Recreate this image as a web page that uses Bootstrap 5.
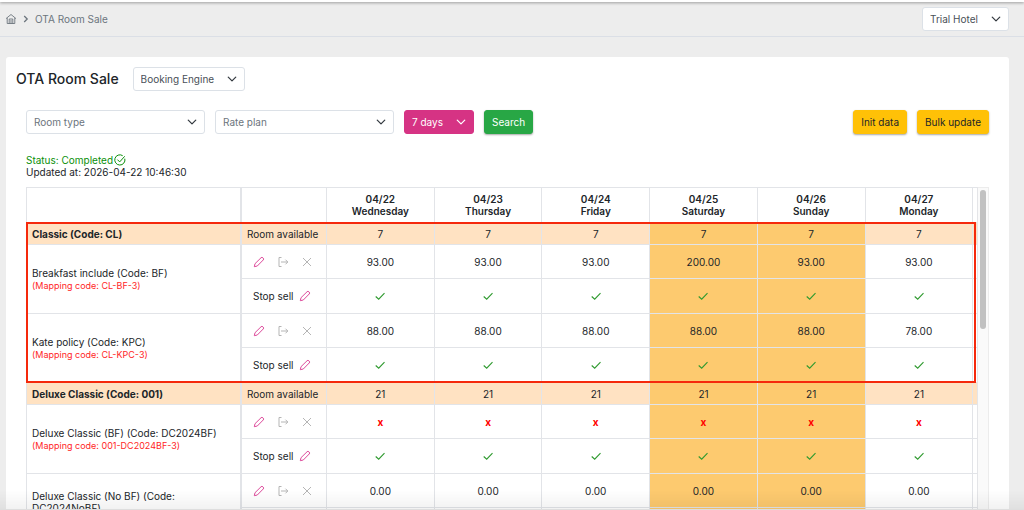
<!DOCTYPE html>
<html lang="en">
<head>
<meta charset="utf-8">
<meta name="viewport" content="width=device-width, initial-scale=1">
<title>OTA Room Sale</title>
<link href="https://cdn.jsdelivr.net/npm/bootstrap@5.3.0/dist/css/bootstrap.min.css" rel="stylesheet">
<style>
  body { font-family: Inter, "Liberation Sans", sans-serif; font-size: 10px; line-height: 12px; color: #212529; background: #ededed; }
  .top-edge { height: 2px; background: #fff; box-shadow: 0 1px 3px rgba(0,0,0,.4); }
  .crumb-bar { height: 35px; padding: 0 15px 0 5px; border-bottom: 1px solid #dbdfe6; }
  .crumb-bar a, .crumb-bar span { color: #6c757d; }
  .panel { margin: 20px 15px 0 6px; border-radius: 3px 3px 0 0; background: #fff; padding: 10px 20px 0; min-height: 0; }
  .panel-head { margin-left: -10px; gap: 14px; }
  .panel-title { font-size: 14px; line-height: 18px; font-weight: 500; margin: 0; }
  .form-select.pick { height: 24px; font-size: 10px; line-height: 14px; padding: 4px 24px 4px 7px; border-color: #dce1e7; border-radius: 3px; color: #495057; background-position: right 7px center; background-size: 10px 10px; }
  .pick.w-hotel { width: 87px; }
  .pick.w-engine { width: 112px; }
  .form-select.pick.w-filter { width: 179px; color: #6c757d; }
  .form-select.pick.w-days { width: 70px; color: #fff; border-color: #d63384; background-color: #d63384; background-image: url("data:image/svg+xml,%3csvg xmlns='http://www.w3.org/2000/svg' viewBox='0 0 16 16'%3e%3cpath fill='none' stroke='%23fff' stroke-linecap='round' stroke-linejoin='round' stroke-width='2' d='m2 5 6 6 6-6'/%3e%3c/svg%3e"); }
  .btn.act { height: 24px; font-size: 10px; line-height: 14px; padding: 4px 7px; border-radius: 3px; box-shadow: 0 1px 2px rgba(0,0,0,.35); }
  .act.go { background: #28a745; border-color: #28a745; color: #fff; }
  .act.warn { background: #ffc107; border-color: #ffc107; color: #212529; }
  .filters { margin-top: 19px; gap: 10px; }
  .status { margin-top: 20px; }
  .done { color: #0a8f0a; gap: 1px; }
  .grid-frame { margin: 9px 0 0; min-height: 0; }
  .grid-clip { overflow: hidden; min-width: 0; border-right: 1px solid #e4e5e8; }
  .rates { table-layout: fixed; width: 1055px; border-collapse: separate; border-spacing: 0; }
  .rates th, .rates td { border: 0 solid #e2e4e8; border-width: 0 1px 1px 0; padding: 0; text-align: center; vertical-align: middle; }
  .rates thead th { height: 36px; border-top-width: 1px; font-weight: 600; }
  .rates tr > :first-child.lead-cell { border-left-width: 1px; border-right-width: 2px; }
  .rates .lead-cell { text-align: left; padding-left: 5px; padding-right: 10px; font-weight: 400; }
  .rates .label-cell { text-align: left; padding-left: 5px; }
  .rates .tool-cell { text-align: left; padding-left: 11px; }
  .rates .room > * { height: 22px; background: #ffe2c2; }
  .rates .room .lead-cell { font-weight: 700; }
  .price > * { height: 34px; }
  .stop > td { height: 35px; }
  .rates .weekend, .rates .room > .weekend { background: #fdca6f; }
  .map-code { color: #ff2626; font-size: 9px; line-height: 13px; }
  .closed { color: #f00; font-weight: 700; }
  .tool { border: 0; padding: 0; background: none; line-height: 0; color: #b5b5b5; }
  .tool.edit { color: #dd4a9b; }
  .tools { gap: 12px; }
  .stop-label { gap: 6px; }
  .focus-frame { position: absolute; top: 35px; left: 0; right: 13px; height: 161px; border: 2px solid #f5290c; pointer-events: none; }
  .track { width: 11px; background: #fafafa; border-right: 1px solid #ececec; border-top: 1px solid #ececec; padding: 2px 2px 0; }
  .thumb { height: 139px; border-radius: 3px; background: #c1c1c1; }
  .fade-edge { height: 20px; background: linear-gradient(rgba(0,0,0,0), rgba(0,0,0,.05)); border-bottom: 1px solid #dedede; pointer-events: none; }
</style>
</head>
<body class="vh-100 overflow-hidden d-flex flex-column">
<svg class="d-none" xmlns="http://www.w3.org/2000/svg">
  <symbol id="i-edit" viewBox="0 0 12 12"><path d="M1.3 10.7l.7-3L8 1.8a1.300 1.300 0 0 1 1.900 0l.3.3a1.300 1.300 0 0 1 0 1.900L4.300 10z" fill="none" stroke="currentColor" stroke-linejoin="round"/></symbol>
  <symbol id="i-export" viewBox="0 0 12 12"><path d="M4.500 1.500H2v9h2.500M4 6h6.800M8.500 3.700L10.800 6 8.500 8.300" fill="none" stroke="currentColor"/></symbol>
  <symbol id="i-close" viewBox="0 0 12 12"><path d="M2 2l8 8M10 2l-8 8" fill="none" stroke="currentColor"/></symbol>
  <symbol id="i-check" viewBox="0 0 12 12"><path d="M1.700 6.500l3 2.700 5.800-6" fill="none" stroke="#2f9a2f" stroke-width="1.100"/></symbol>
</svg>

<div class="top-edge flex-shrink-0"></div>
<nav class="crumb-bar d-flex align-items-center justify-content-between flex-shrink-0" aria-label="Breadcrumb">
  <div class="d-flex align-items-center gap-1">
    <a href="#" aria-label="Home" class="d-flex"><svg width="12" height="12" viewBox="0 0 12 12" fill="none" stroke="currentColor" stroke-width=".9"><path d="M1 5.600L6 1.500l5 4.100M2.200 5v5.500h7.600V5M4.200 10.500V6h3.600v4.500M6 7v3.500"/></svg></a>
    <svg width="10" height="10" viewBox="0 0 10 10" fill="none" stroke="#6c757d" stroke-width="1.300"><path d="M3.200 2l3 3-3 3"/></svg>
    <span>OTA Room Sale</span>
  </div>
  <select class="form-select pick w-hotel" aria-label="Hotel"><option>Trial Hotel</option></select>
</nav>

<main class="panel flex-grow-1 d-flex flex-column">
  <div class="panel-head d-flex align-items-center">
    <h1 class="panel-title">OTA Room Sale</h1>
    <select class="form-select pick w-engine" aria-label="Channel"><option>Booking Engine</option></select>
  </div>

  <form class="filters d-flex" onsubmit="return false">
    <select class="form-select pick w-filter" aria-label="Room type"><option>Room type</option></select>
    <select class="form-select pick w-filter" aria-label="Rate plan"><option>Rate plan</option></select>
    <select class="form-select pick w-days" aria-label="Period"><option>7 days</option></select>
    <button type="submit" class="btn act go">Search</button>
    <button type="button" class="btn act warn ms-auto">Init data</button>
    <button type="button" class="btn act warn">Bulk update</button>
  </form>

  <div class="status">
    <div class="done d-flex align-items-center">Status: Completed
      <svg width="12" height="12" viewBox="0 0 12 12" fill="none" stroke="currentColor"><path d="M10.800 4.700A5.100 5.100 0 1 1 8.700 1.700M3.400 5.600l2.300 2.300 5-5.600"/></svg></div>
    <div>Updated at: 2026-04-22 10:46:30</div>
  </div>

  <div class="grid-frame position-relative d-flex flex-grow-1">
    <div class="grid-clip flex-grow-1">
      <table class="rates">
        <colgroup><col style="width:216px"><col style="width:85px"><col><col><col><col><col><col><col></colgroup>
        <thead><tr><th class="lead-cell"></th><th></th></tr></thead>
        <tbody></tbody>
      </table>
    </div>
    <div class="track flex-shrink-0"><div class="thumb"></div></div>
    <div class="focus-frame"></div>
  </div>
</main>
<div class="fade-edge fixed-bottom"></div>

<script src="https://cdn.jsdelivr.net/npm/bootstrap@5.3.0/dist/js/bootstrap.bundle.min.js"></script>
<script>
  const days = [['04/22','Wednesday'],['04/23','Thursday'],['04/24','Friday'],['04/25','Saturday'],['04/26','Sunday'],['04/27','Monday']];
  const rooms = [
    { name: 'Classic (Code: CL)', left: 7, plans: [
      { name: 'Breakfast include (Code: BF)', map: 'CL-BF-3', rates: ['93.00','93.00','93.00','200.00','93.00','93.00'] },
      { name: 'Kate policy (Code: KPC)', map: 'CL-KPC-3', rates: ['88.00','88.00','88.00','88.00','88.00','78.00'] } ] },
    { name: 'Deluxe Classic (Code: 001)', left: 21, plans: [
      { name: 'Deluxe Classic (BF) (Code: DC2024BF)', map: '001-DC2024BF-3', rates: Array(6).fill('<span class="closed">x</span>') },
      { name: 'Deluxe Classic (No BF) (Code: DC2024NoBF)', rates: Array(6).fill('0.00') } ] }
  ];
  const icon = (id, cls = '') => `<svg class="d-block ${cls}" width="12" height="12"><use href="#i-${id}"/></svg>`;
  const tool = (id, label, cls = '') => `<button type="button" class="tool ${cls}" aria-label="${label}">${icon(id)}</button>`;
  const cells = fn => days.map((d, i) => `<td class="${/^S/.test(d[1]) ? 'weekend' : ''}">${fn(i)}</td>`).join('') + '<td></td>';
  const mapping = p => `<div class="map-code">${p.map ? `(Mapping code: ${p.map})` : '&nbsp;'}</div>`;

  document.querySelector('.rates thead tr').insertAdjacentHTML('beforeend',
    days.map(d => `<th scope="col">${d[0]}<br>${d[1]}</th>`).join('') + '<th></th>');
  document.querySelector('.rates tbody').innerHTML = rooms.map(r =>
    `<tr class="room"><th class="lead-cell" scope="row">${r.name}</th><td class="label-cell">Room available</td>${cells(() => r.left)}</tr>` +
    r.plans.map(p =>
      `<tr class="price"><th class="lead-cell" scope="row" rowspan="2">${p.name}${mapping(p)}</th>
       <td class="tool-cell"><div class="tools d-flex">${tool('edit', 'Edit price', 'edit')}${tool('export', 'Copy price')}${tool('close', 'Clear price')}</div></td>${cells(i => p.rates[i])}</tr>
       <tr class="stop"><td class="tool-cell"><div class="stop-label d-flex align-items-center">Stop sell ${tool('edit', 'Edit stop sell', 'edit')}</div></td>${cells(() => icon('check', 'mx-auto'))}</tr>`).join('')).join('');
</script>
</body>
</html>
